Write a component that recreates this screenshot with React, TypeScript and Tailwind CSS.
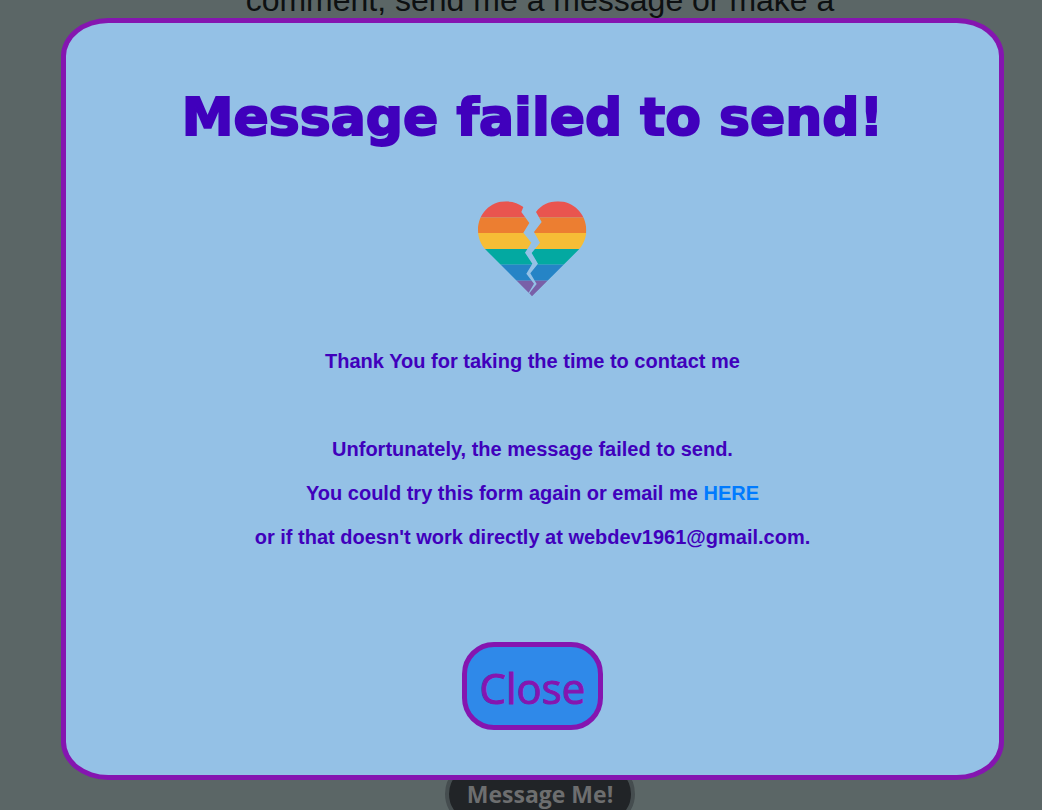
import React from "react";

const STRIPES: { y: number; height: number; fill: string }[] = [
  { y: 40, height: 56, fill: "#e9554f" },
  { y: 96, height: 47, fill: "#ec7e31" },
  { y: 143, height: 48, fill: "#f6bd36" },
  { y: 191, height: 47, fill: "#03a9a1" },
  { y: 238, height: 48, fill: "#2584c6" },
  { y: 286, height: 54, fill: "#7960a8" },
];

function BrokenHeart() {
  return (
    <svg viewBox="54 47 330 288" className="h-24 w-[110px]" role="img" aria-label="Broken heart">
      <defs>
        <clipPath id="heart-halves">
          <path d="M190 65 L184 80 L208 113 L190 142 L214 172 L195 202 L217 235 L199 265 L222 295 L206 322 L78 194 C62 178 54 157 54 134 C54 87 90 48 138 48 C158 48 176 54 190 65 Z" />
          <path d="M228 80 L245 110 L222 140 L240 172 L215 203 L234 235 L211 264 L230 296 L208 324 L216 333 L355 194 C371 178 379 157 379 134 C379 87 341 48 294 48 C267 48 243 60 228 80 Z" />
        </clipPath>
      </defs>
      <g clipPath="url(#heart-halves)">
        {STRIPES.map((s) => (
          <rect key={s.y} x="50" y={s.y} width="332" height={s.height} fill={s.fill} />
        ))}
      </g>
    </svg>
  );
}

function FailureDialog() {
  return (
    <div className="absolute inset-0 flex pt-[18px] pr-[38px] pb-[30px] pl-[61px]">
      <section
        role="dialog"
        aria-modal="true"
        aria-labelledby="dialog-title"
        className="flex w-full flex-col items-center rounded-[5%] border-[5px] border-[#8515b0] bg-[#94c1e6] px-6 pt-[62px] pb-[45px] text-center font-['Liberation_Sans',Arial,sans-serif] text-[#4000bc]"
      >
        <h1
          id="dialog-title"
          className="font-['DejaVu_Sans','Arial_Black',sans-serif] text-[52px] leading-[64px] font-black [-webkit-text-stroke:2px_#4000bc]"
        >
          Message failed to send!
        </h1>
        <div className="mt-[52px] mb-[42px]">
          <BrokenHeart />
        </div>
        <div className="text-[20px] leading-[44px] font-bold">
          <p className="mb-11">Thank You for taking the time to contact me</p>
          <p>Unfortunately, the message failed to send.</p>
          <p>
            You could try this form again or email me{" "}
            <a href="mailto:webdev1961@gmail.com" className="text-[#007bff]">
              HERE
            </a>
          </p>
          <p>or if that doesn't work directly at webdev1961@gmail.com.</p>
        </div>
        <button
          type="button"
          className="mt-auto h-[88px] rounded-[32px] border-[5px] border-[#8515b0] bg-[#2f89e9] px-[13px] pt-1 font-['Open_Sans','Segoe_UI',sans-serif] text-[42px] leading-none text-[#8515b0] [-webkit-text-stroke:1px_#8515b0]"
        >
          Close
        </button>
      </section>
    </div>
  );
}

export default function App() {
  return (
    <div className="relative flex h-screen min-h-[810px] flex-col items-center justify-between overflow-hidden bg-[#5b6666] pl-[38px]">
      <p className="-mt-[18px] font-['Liberation_Sans',Arial,sans-serif] text-[32px] leading-9 text-[#0d1011]">
        comment, send me a message or make a
      </p>
      <button
        type="button"
        className="-mb-4 h-16 rounded-[32px] border-4 border-[#454d4f] bg-[#212427] px-[18px] font-['Open_Sans','Segoe_UI',sans-serif] text-[23px] leading-none font-bold text-[#6d6e6f]"
      >
        Message Me!
      </button>
      <FailureDialog />
    </div>
  );
}
